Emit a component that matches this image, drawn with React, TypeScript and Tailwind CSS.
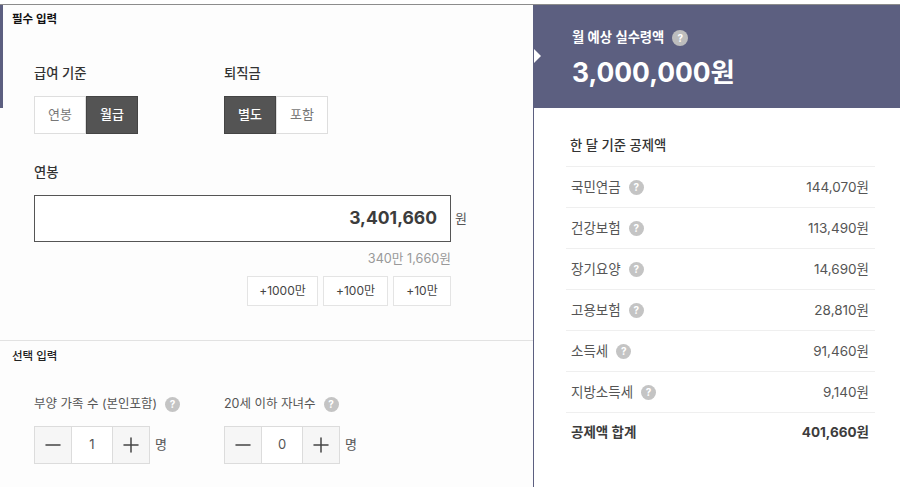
import { Minus, Plus } from "lucide-react";

const font = { fontFamily: '"Inter", "Noto Sans CJK KR", sans-serif' };

const deductions = [
  ["국민연금", "144,070원"],
  ["건강보험", "113,490원"],
  ["장기요양", "14,690원"],
  ["고용보험", "28,810원"],
  ["소득세", "91,460원"],
  ["지방소득세", "9,140원"],
];

function Help({ big = false }: { big?: boolean }) {
  return (
    <span
      className={
        big
          ? "flex h-[16px] w-[16px] shrink-0 items-center justify-center rounded-full bg-[#bdbdbd] text-[10px] font-bold leading-none text-white"
          : "flex h-[15px] w-[15px] shrink-0 items-center justify-center rounded-full bg-[#c4c4c4] text-[10px] font-bold leading-none text-white"
      }
    >
      ?
    </span>
  );
}

function Toggle({ items, active }: { items: string[]; active: number }) {
  return (
    <div className="flex h-[38px] w-[104px]">
      {items.map((item, i) => (
        <button
          key={item}
          className={
            i === active
              ? "h-full w-[52px] border border-[#444] bg-[#545454] text-[13px] font-medium text-white"
              : "h-full w-[52px] border border-[#dedede] bg-white text-[13px] text-[#777]"
          }
        >
          {item}
        </button>
      ))}
    </div>
  );
}

function Stepper({ value }: { value: number }) {
  return (
    <div className="flex items-center">
      <div className="flex h-[38px] w-[116px] border border-[#dcdcdc] bg-white">
        <button className="flex w-[37px] items-center justify-center border-r border-[#dcdcdc] bg-[#f6f6f6] text-[#444]">
          <Minus size={24} strokeWidth={1.5} />
        </button>
        <span className="flex flex-1 items-center justify-center text-[13px] text-[#555]">{value}</span>
        <button className="flex w-[37px] items-center justify-center border-l border-[#dcdcdc] bg-[#f6f6f6] text-[#444]">
          <Plus size={24} strokeWidth={1.5} />
        </button>
      </div>
      <span className="ml-[5px] text-[13px] text-[#555]">명</span>
    </div>
  );
}

export default function App() {
  return (
    <div className="relative h-[487px] w-[900px] overflow-hidden bg-white pt-[4px]" style={font}>
      <div className="flex h-full border-t border-[#8c8c8c]">
        {/* left side: inputs */}
        <div className="relative h-full w-[534px] shrink-0 border-r border-[#5c5f80] bg-[#fdfdfd]">
          <div className="absolute left-0 top-0 h-[103px] w-[3px] bg-[#5c5f80]" />
          <section className="h-[336px] border-b border-[#e2e2e2] pl-[12px] pt-[6px]">
            <h2 className="text-[11.5px] font-bold leading-[16px] text-[#111]">필수 입력</h2>
            <div className="ml-[22px] mt-[36px] flex gap-[86px]">
              <div>
                <p className="text-[13.3px] font-medium leading-[20px] text-[#333]">급여 기준</p>
                <div className="mt-[13px]">
                  <Toggle items={["연봉", "월급"]} active={1} />
                </div>
              </div>
              <div>
                <p className="text-[13.3px] font-medium leading-[20px] text-[#333]">퇴직금</p>
                <div className="mt-[13px]">
                  <Toggle items={["별도", "포함"]} active={0} />
                </div>
              </div>
            </div>
            <p className="ml-[22px] mt-[28px] text-[13.3px] font-medium leading-[20px] text-[#333]">연봉</p>
            <div className="ml-[22px] mt-[13px] flex items-center">
              <div className="flex h-[47px] w-[417px] items-center justify-end border border-[#555] bg-white pr-[13px] text-[17.5px] font-bold text-[#3c3c3c]">
                3,401,660
              </div>
              <span className="ml-[4px] text-[13px] text-[#555]">원</span>
            </div>
            <p className="ml-[22px] mt-[8px] w-[417px] text-right text-[12.7px] leading-[18px] text-[#999]">
              340만 1,660원
            </p>
            <div className="ml-[22px] mt-[8px] flex w-[417px] justify-end gap-[5px] text-[12px] text-[#444]">
              <button className="h-[30px] w-[71px] border border-[#e4e4e4] bg-white">+1000만</button>
              <button className="h-[30px] w-[65px] border border-[#e4e4e4] bg-white">+100만</button>
              <button className="h-[30px] w-[58px] border border-[#e4e4e4] bg-white">+10만</button>
            </div>
          </section>
          <section className="pl-[12px] pt-[7px]">
            <h2 className="text-[11.5px] font-medium leading-[16px] text-[#222]">선택 입력</h2>
            <div className="ml-[22px] mt-[30px] flex">
              <div className="w-[190px]">
                <div className="flex h-[20px] items-center gap-[8px] text-[12.5px] text-[#555]">
                  부양 가족 수 (본인포함) <Help />
                </div>
                <div className="mt-[12px]">
                  <Stepper value={1} />
                </div>
              </div>
              <div>
                <div className="flex h-[20px] items-center gap-[8px] text-[12.5px] text-[#555]">
                  20세 이하 자녀수 <Help />
                </div>
                <div className="mt-[12px]">
                  <Stepper value={0} />
                </div>
              </div>
            </div>
          </section>
        </div>

        {/* right side: result */}
        <div className="flex-1">
          <div className="relative h-[103px] bg-[#5c5f80] pl-[38px] pt-[23px] text-white">
            <span className="absolute left-0 top-[44px] h-0 w-0 border-y-[7px] border-l-[7px] border-y-transparent border-l-white" />
            <div className="flex h-[20px] items-center gap-[8px] text-[13.3px] font-semibold">
              월 예상 실수령액 <Help big />
            </div>
            <p className="mt-[5px] text-[26.4px] font-bold leading-[38px]">3,000,000원</p>
          </div>
          <div className="ml-[32px] w-[309px] pt-[27px]">
            <h3 className="h-[31px] pl-[4px] text-[13.3px] font-medium leading-[20px] text-[#333]">
              한 달 기준 공제액
            </h3>
            {deductions.map(([name, amount]) => (
              <div
                key={name}
                className="flex h-[41px] items-center justify-between border-t border-[#efefef] pl-[5px] pr-[6px] text-[13.5px] text-[#555]"
              >
                <span className="flex items-center gap-[8px]">
                  {name} <Help />
                </span>
                <span>{amount}</span>
              </div>
            ))}
            <div className="flex h-[40px] items-center justify-between border-t border-[#efefef] pl-[5px] pr-[6px] text-[13.5px] font-bold text-[#3c3c3c]">
              <span>공제액 합계</span>
              <span>401,660원</span>
            </div>
          </div>
        </div>
      </div>
    </div>
  );
}
